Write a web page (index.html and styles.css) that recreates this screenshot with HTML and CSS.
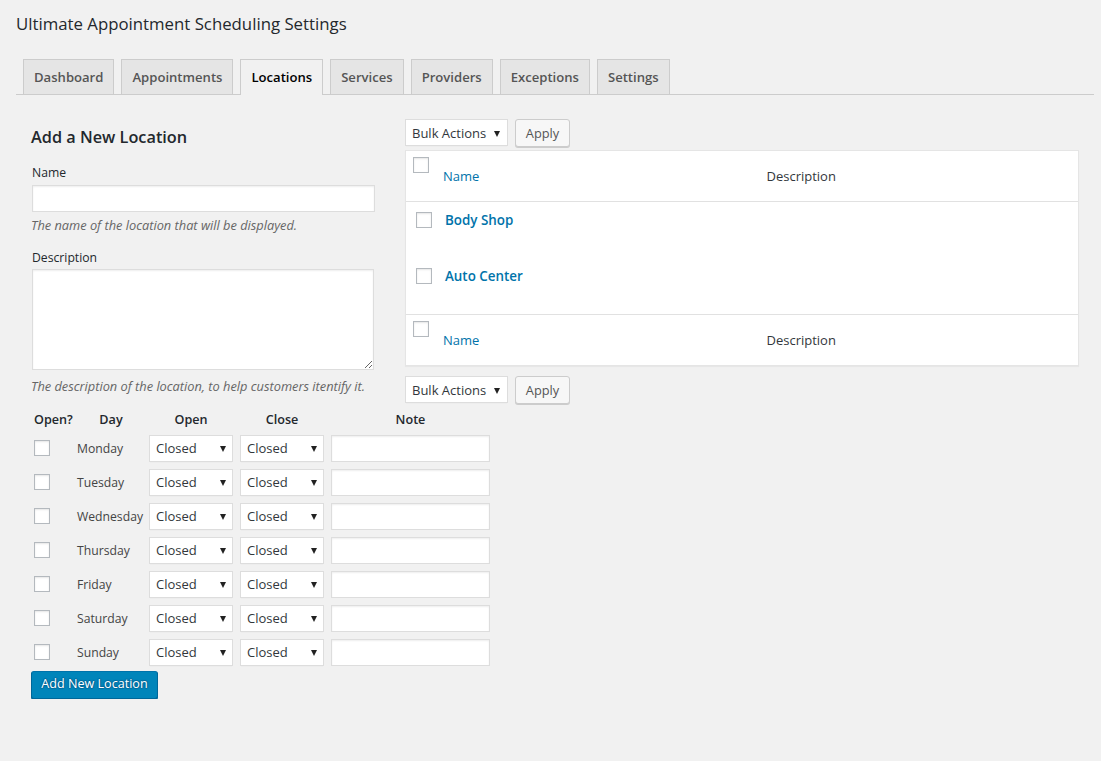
FILE: index.html
```html
<!DOCTYPE html>
<html>
<head>
<meta charset="utf-8">
<link rel="stylesheet" href="styles.css">
</head>
<body>
<div class="wrap">
  <h1 class="page-title">Ultimate Appointment Scheduling Settings</h1>
  <nav class="tabs">
    <a class="tab">Dashboard</a>
    <a class="tab">Appointments</a>
    <a class="tab tab-active">Locations</a>
    <a class="tab">Services</a>
    <a class="tab">Providers</a>
    <a class="tab">Exceptions</a>
    <a class="tab">Settings</a>
  </nav>

  <div class="cols">
    <div class="col-left">
      <h2 class="form-title">Add a New Location</h2>
      <label class="field-label">Name</label>
      <input class="text-input name-input" type="text">
      <p class="hint hint-name">The name of the location that will be displayed.</p>
      <label class="field-label label-desc">Description</label>
      <textarea class="textarea"></textarea>
      <p class="hint hint-desc">The description of the location, to help customers itentify it.</p>

      <div class="hours">
        <div class="hours-head h-open">Open?</div>
        <div class="hours-head h-day">Day</div>
        <div class="hours-head h-sel">Open</div>
        <div class="hours-head h-sel">Close</div>
        <div class="hours-head h-note">Note</div>

        <div class="cell"><input type="checkbox" class="cb"></div>
        <div class="cell day">Monday</div>
        <div class="cell"><div class="select sel-hours"><span>Closed</span><i class="arrow"></i></div></div>
        <div class="cell"><div class="select sel-hours"><span>Closed</span><i class="arrow"></i></div></div>
        <div class="cell"><input type="text" class="text-input note"></div>

        <div class="cell"><input type="checkbox" class="cb"></div>
        <div class="cell day">Tuesday</div>
        <div class="cell"><div class="select sel-hours"><span>Closed</span><i class="arrow"></i></div></div>
        <div class="cell"><div class="select sel-hours"><span>Closed</span><i class="arrow"></i></div></div>
        <div class="cell"><input type="text" class="text-input note"></div>

        <div class="cell"><input type="checkbox" class="cb"></div>
        <div class="cell day">Wednesday</div>
        <div class="cell"><div class="select sel-hours"><span>Closed</span><i class="arrow"></i></div></div>
        <div class="cell"><div class="select sel-hours"><span>Closed</span><i class="arrow"></i></div></div>
        <div class="cell"><input type="text" class="text-input note"></div>

        <div class="cell"><input type="checkbox" class="cb"></div>
        <div class="cell day">Thursday</div>
        <div class="cell"><div class="select sel-hours"><span>Closed</span><i class="arrow"></i></div></div>
        <div class="cell"><div class="select sel-hours"><span>Closed</span><i class="arrow"></i></div></div>
        <div class="cell"><input type="text" class="text-input note"></div>

        <div class="cell"><input type="checkbox" class="cb"></div>
        <div class="cell day">Friday</div>
        <div class="cell"><div class="select sel-hours"><span>Closed</span><i class="arrow"></i></div></div>
        <div class="cell"><div class="select sel-hours"><span>Closed</span><i class="arrow"></i></div></div>
        <div class="cell"><input type="text" class="text-input note"></div>

        <div class="cell"><input type="checkbox" class="cb"></div>
        <div class="cell day">Saturday</div>
        <div class="cell"><div class="select sel-hours"><span>Closed</span><i class="arrow"></i></div></div>
        <div class="cell"><div class="select sel-hours"><span>Closed</span><i class="arrow"></i></div></div>
        <div class="cell"><input type="text" class="text-input note"></div>

        <div class="cell"><input type="checkbox" class="cb"></div>
        <div class="cell day">Sunday</div>
        <div class="cell"><div class="select sel-hours"><span>Closed</span><i class="arrow"></i></div></div>
        <div class="cell"><div class="select sel-hours"><span>Closed</span><i class="arrow"></i></div></div>
        <div class="cell"><input type="text" class="text-input note"></div>
      </div>

      <button class="btn-primary">Add New Location</button>
    </div>

    <div class="col-right">
      <div class="tablenav">
        <div class="select sel-bulk"><span>Bulk Actions</span><i class="arrow"></i></div>
        <button class="btn">Apply</button>
      </div>

      <table class="list">
        <colgroup><col class="c-check"><col><col></colgroup>
        <thead>
          <tr>
            <th class="check-head"><input type="checkbox" class="cb"></th>
            <th class="col-head"><a class="sort-link">Name</a></th>
            <th class="col-head desc-head">Description</th>
          </tr>
        </thead>
        <tbody>
          <tr>
            <td class="check-cell"><input type="checkbox" class="cb"></td>
            <td class="name-cell"><a class="row-title">Body Shop</a></td>
            <td class="desc-cell"></td>
          </tr>
          <tr>
            <td class="check-cell"><input type="checkbox" class="cb"></td>
            <td class="name-cell"><a class="row-title">Auto Center</a></td>
            <td class="desc-cell"></td>
          </tr>
        </tbody>
        <tfoot>
          <tr>
            <th class="check-head"><input type="checkbox" class="cb"></th>
            <th class="col-head"><a class="sort-link">Name</a></th>
            <th class="col-head desc-head">Description</th>
          </tr>
        </tfoot>
      </table>

      <div class="tablenav tablenav-bottom">
        <div class="select sel-bulk"><span>Bulk Actions</span><i class="arrow"></i></div>
        <button class="btn">Apply</button>
      </div>
    </div>
  </div>
</div>
</body>
</html>
```

FILE: styles.css
```css
* { box-sizing: border-box; }

html, body {
  margin: 0;
  padding: 0;
  background: #f1f1f1;
}

body {
  font-family: "Open Sans", "Noto Sans", sans-serif;
  font-size: 12.2px;
  color: #23282d;
  line-height: 1.4;
}

.wrap {
  margin: 0 7px 0 16px;
}

.page-title {
  margin: 0;
  padding-top: 11px;
  font-size: 16.8px;
  font-weight: 400;
  line-height: 26px;
  color: #23282d;
}

.tabs {
  display: flex;
  margin-top: 22px;
  border-bottom: 1px solid #ccc;
  height: 36px;
  padding-left: 7px;
  gap: 7px;
}

.tab {
  display: block;
  height: 35px;
  padding: 5px 10px;
  border: 1px solid #ccc;
  border-bottom: none;
  background: #e5e5e5;
  color: #555;
  font-size: 13.1px;
  font-weight: 600;
  line-height: 24px;
  white-space: nowrap;
}

.tab-active {
  background: #f1f1f1;
  color: #000;
  height: 36px;
}

.cols {
  display: flex;
  align-items: flex-start;
  margin-top: 24px;
  padding-left: 15px;
  gap: 30px;
  padding-right: 15px;
}

.col-left {
  width: 344px;
  flex: none;
}

.col-right {
  flex: 1;
}

.form-title {
  margin: 7px 0 0;
  font-size: 16.3px;
  font-weight: 600;
  line-height: 22px;
  color: #23282d;
}

.field-label {
  display: block;
  margin-top: 16px;
  line-height: 18px;
  padding-left: 1px;
}

.label-desc {
  margin-top: 15px;
}

.text-input {
  display: block;
  height: 27px;
  background: #fff;
  border: 1px solid #ddd;
  box-shadow: inset 0 1px 2px rgba(0,0,0,.07);
  font: inherit;
  padding: 3px 5px;
  outline: none;
}

.name-input {
  width: 343px;
  margin: 3px 0 0 1px;
}

.textarea {
  display: block;
  width: 342px;
  height: 101px;
  margin: 2px 0 0 1px;
  background: #fff;
  border: 1px solid #ddd;
  box-shadow: inset 0 1px 2px rgba(0,0,0,.07);
  font: inherit;
  resize: vertical;
  outline: none;
}

.hint {
  margin: 4px 0 0;
  font-style: italic;
  font-size: 12.8px;
  color: #666;
  line-height: 18px;
}

.hint-desc {
  margin-top: 7px;
}

.hours {
  display: grid;
  grid-template-columns: 43px 72px 91px 91px 159px;
  grid-auto-rows: 34px;
  grid-template-rows: 21px;
  margin: 15px 0 0 3px;
}

.hours-head {
  font-weight: 600;
  font-size: 12.6px;
  line-height: 20px;
  text-align: center;
  color: #23282d;
}

.h-open { text-align: left; }
.h-day { padding-right: 4px; }
.h-sel { width: 84px; }
.h-note { width: 159px; }

.cell {
  display: flex;
  align-items: center;
}

.day {
  color: #444;
  white-space: nowrap;
  padding-top: 2px;
}

.cb {
  -webkit-appearance: none;
  appearance: none;
  width: 16px;
  height: 16px;
  margin: 0;
  background: #fff;
  border: 1px solid #b4b9be;
  box-shadow: inset 0 1px 2px rgba(0,0,0,.1);
  display: block;
}

.select {
  display: flex;
  align-items: center;
  justify-content: space-between;
  height: 27px;
  background: #fff;
  border: 1px solid #ddd;
  box-shadow: 0 1px 1px -1px rgba(0,0,0,.1);
  padding: 0 6px 0 6px;
  color: #32373c;
  font-size: 13px;
  white-space: nowrap;
}

.arrow {
  display: block;
  width: 0;
  height: 0;
  border-left: 3px solid transparent;
  border-right: 3px solid transparent;
  border-top: 6px solid #222;
  margin-top: 1px;
}

.sel-hours {
  width: 84px;
}

.note {
  width: 159px;
}

.btn-primary {
  display: block;
  margin-top: 2px;
  height: 28px;
  width: 127px;
  padding: 0 5px 2px;
  background: #0085ba;
  border: 1px solid #0073aa;
  border-color: #0073aa #006799 #006799;
  border-radius: 3px;
  box-shadow: 0 1px 0 #006799;
  color: #fff;
  text-shadow: 0 -1px 1px #006799, 1px 0 1px #006799, 0 1px 1px #006799, -1px 0 1px #006799;
  font: inherit;
  font-size: 12.6px;
  line-height: 24px;
  white-space: nowrap;
}

.tablenav {
  display: flex;
  align-items: flex-start;
  gap: 7px;
  height: 31px;
}

.tablenav-bottom {
  margin-top: 10px;
}

.sel-bulk {
  width: 103px;
  padding-left: 6px;
  padding-right: 7px;
  padding-top: 1px;
}

.btn {
  height: 28px;
  padding: 0 5px 1px;
  background: #f7f7f7;
  border: 1px solid #ccc;
  border-radius: 3px;
  box-shadow: 0 1px 0 #ccc;
  color: #555;
  font: inherit;
  font-size: 12.8px;
  line-height: 24px;
  width: 55px;
}

.list {
  width: 100%;
  table-layout: fixed;
  border-collapse: separate;
  border-spacing: 0;
  background: #fff;
  border: 1px solid #e5e5e5;
  box-shadow: 0 1px 1px rgba(0,0,0,.04);
}

.c-check { width: 29px; }

.list th, .list td {
  text-align: left;
  vertical-align: top;
  font-weight: 400;
  padding: 0;
}

.list thead tr { height: 51px; }
.list thead th { border-bottom: 1px solid #e1e1e1; }
.list tfoot tr { height: 51px; }
.list tfoot th { border-top: 1px solid #e1e1e1; }
.list tbody tr { height: 56px; }

.check-head { padding: 6px 0 0 7px !important; }

.col-head {
  padding: 16px 10px 0 8px !important;
  line-height: 19px;
  font-size: 13px;
}

.desc-head {
  padding-left: 10px !important;
  color: #32373c;
}

.sort-link {
  color: #0073aa;
}

.check-cell {
  padding: 10px 0 0 10px !important;
}

.name-cell {
  padding: 9px 10px 0 10px !important;
  line-height: 19px;
}

.row-title {
  color: #0073aa;
  font-weight: 600;
  font-size: 13.4px;
}
```
